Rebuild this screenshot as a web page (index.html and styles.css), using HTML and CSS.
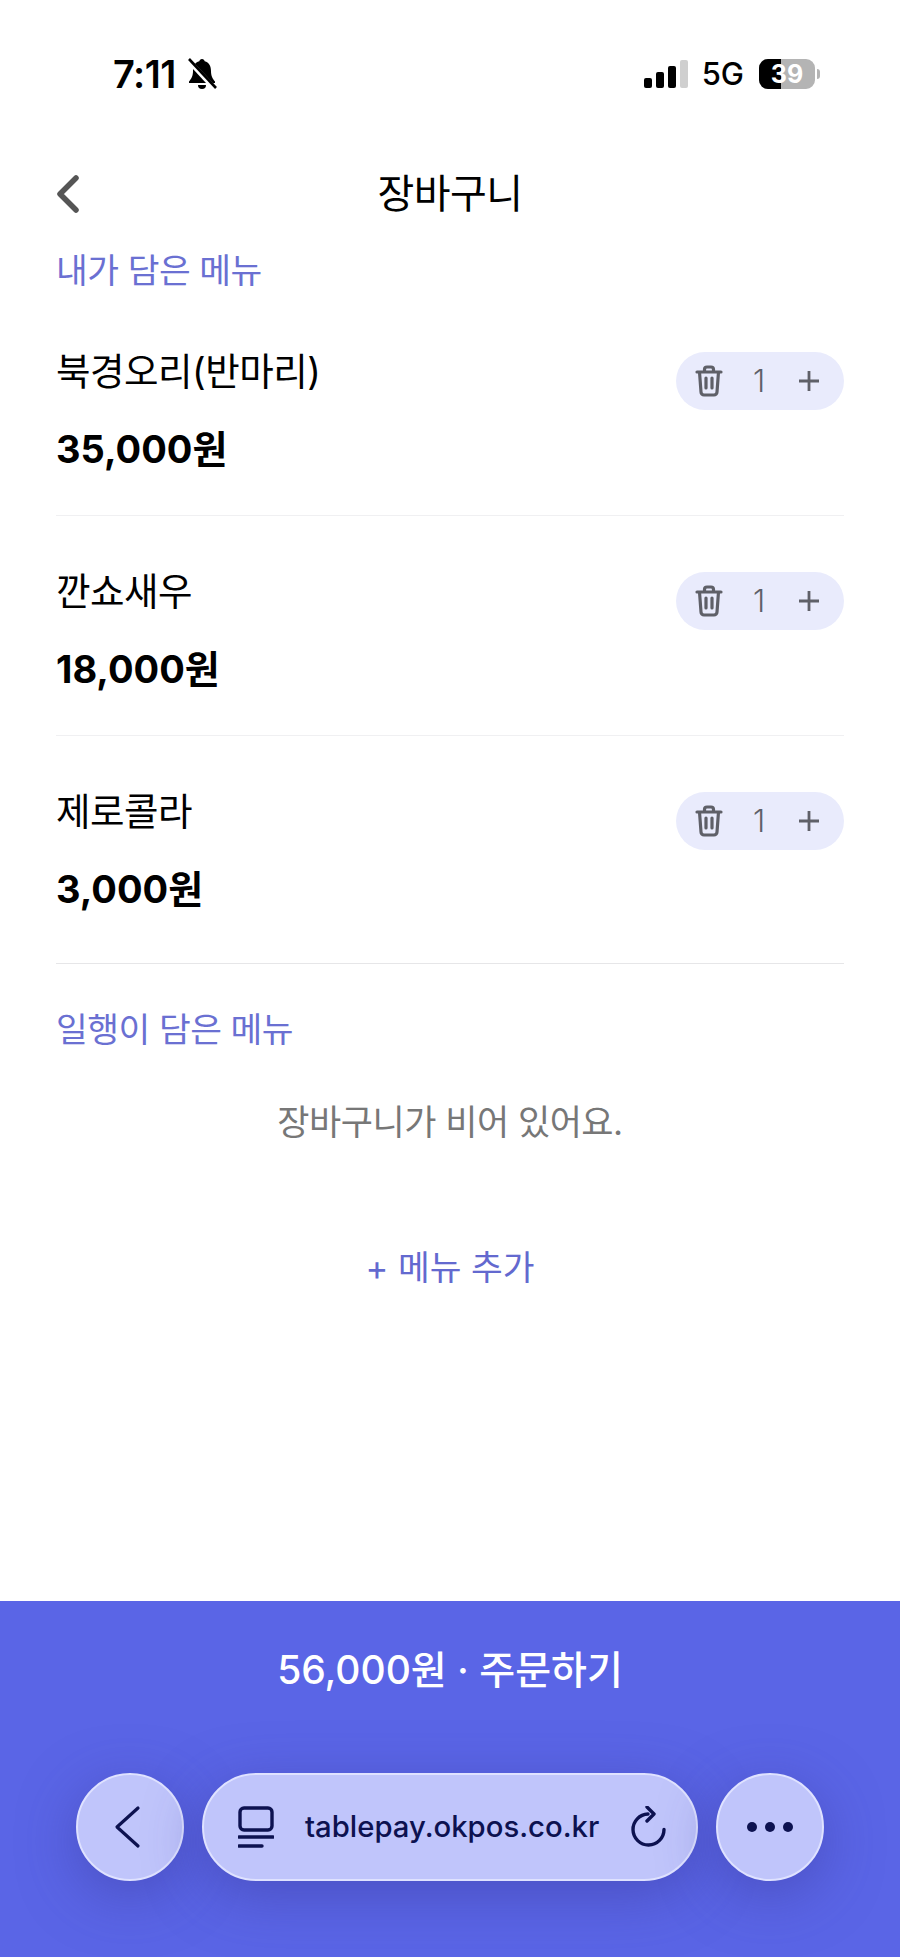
FILE: index.html
```html
<!DOCTYPE html>
<html lang="ko">
<head>
    <meta charset="UTF-8">
    <meta name="viewport" content="width=device-width, initial-scale=1.0">
    <title>장바구니</title>
    <link rel="stylesheet" href="styles.css">
</head>
<body>
    <div class="page">
        <div class="status-bar">
            <div class="status-left">
                <span class="time">7:11</span>
                <svg class="bell" width="30" height="34" viewBox="0 0 30 34">
                    <path d="M15 2c1.500 0 2.500 1 2.700 2.300C22 5.500 24 9 24 14c0 5 1.500 7.500 4 10.500V26H2v-1.500C4.500 21.500 6 19 6 14c0-5 2-8.500 6.300-9.700C12.500 3 13.500 2 15 2z" fill="#000"/>
                    <path d="M11 28h8a4 4 0 0 1-8 0z" fill="#000"/>
                    <path d="M1 3l27 29" stroke="#fff" stroke-width="5"/>
                    <path d="M2 2l27 29" stroke="#000" stroke-width="2.600"/>
                </svg>
            </div>
            <div class="status-right">
                <div class="signal">
                    <span class="bar bar-1"></span>
                    <span class="bar bar-2"></span>
                    <span class="bar bar-3"></span>
                    <span class="bar bar-4"></span>
                </div>
                <span class="network">5G</span>
                <div class="battery"><span class="battery-fill"></span><span class="battery-text">39</span></div>
                <span class="battery-nub"></span>
            </div>
        </div>

        <div class="header">
            <svg class="header-back" width="26" height="38" viewBox="0 0 26 38">
                <path d="M22 3L6 19l16 16" fill="none" stroke="#555" stroke-width="5.500" stroke-linecap="round" stroke-linejoin="round"/>
            </svg>
            <h1 class="header-title">장바구니</h1>
        </div>

        <h2 class="section-title">내가 담은 메뉴</h2>
        <div class="cart-item cart-item-first">
            <div>
                <div class="item-name">북경오리(반마리)</div>
                <div class="item-price">35,000원</div>
            </div>
            <div class="stepper">
                <svg class="trash" width="28" height="32" viewBox="0 0 28 32">
                    <path d="M2 7h24M9.500 7V4.500A2.500 2.500 0 0 1 12 2h4a2.500 2.500 0 0 1 2.500 2.500V7M4.500 7l1.500 20a3 3 0 0 0 3 3h10a3 3 0 0 0 3-3l1.500-20M11 13v10M17 13v10" fill="none" stroke="#5f6068" stroke-width="3.200" stroke-linecap="round" stroke-linejoin="round"/>
                </svg>
                <span class="qty">1</span>
                <svg class="plus" width="22" height="22" viewBox="0 0 22 22">
                    <path d="M1 11h20M11 1v20" stroke="#5f6068" stroke-width="2.800"/>
                </svg>
            </div>
        </div>
        <div class="cart-item">
            <div>
                <div class="item-name">깐쇼새우</div>
                <div class="item-price">18,000원</div>
            </div>
            <div class="stepper">
                <svg class="trash" width="28" height="32" viewBox="0 0 28 32">
                    <path d="M2 7h24M9.500 7V4.500A2.500 2.500 0 0 1 12 2h4a2.500 2.500 0 0 1 2.500 2.500V7M4.500 7l1.500 20a3 3 0 0 0 3 3h10a3 3 0 0 0 3-3l1.500-20M11 13v10M17 13v10" fill="none" stroke="#5f6068" stroke-width="3.200" stroke-linecap="round" stroke-linejoin="round"/>
                </svg>
                <span class="qty">1</span>
                <svg class="plus" width="22" height="22" viewBox="0 0 22 22">
                    <path d="M1 11h20M11 1v20" stroke="#5f6068" stroke-width="2.800"/>
                </svg>
            </div>
        </div>
        <div class="cart-item cart-item-last">
            <div>
                <div class="item-name">제로콜라</div>
                <div class="item-price">3,000원</div>
            </div>
            <div class="stepper">
                <svg class="trash" width="28" height="32" viewBox="0 0 28 32">
                    <path d="M2 7h24M9.500 7V4.500A2.500 2.500 0 0 1 12 2h4a2.500 2.500 0 0 1 2.500 2.500V7M4.500 7l1.500 20a3 3 0 0 0 3 3h10a3 3 0 0 0 3-3l1.500-20M11 13v10M17 13v10" fill="none" stroke="#5f6068" stroke-width="3.200" stroke-linecap="round" stroke-linejoin="round"/>
                </svg>
                <span class="qty">1</span>
                <svg class="plus" width="22" height="22" viewBox="0 0 22 22">
                    <path d="M1 11h20M11 1v20" stroke="#5f6068" stroke-width="2.800"/>
                </svg>
            </div>
        </div>

        <h2 class="section-title section-title-group">일행이 담은 메뉴</h2>
        <p class="empty">장바구니가 비어 있어요.</p>
        <div class="add-menu">+ 메뉴 추가</div>

        <div class="footer">
            <div class="order">56,000원 · 주문하기</div>
            <div class="browser-bar">
                <div class="round-btn">
                    <svg class="bar-back" width="30" height="44" viewBox="0 0 30 44">
                        <path d="M26 3L5 22l21 19" fill="none" stroke="#0d1250" stroke-width="3.200" stroke-linecap="round" stroke-linejoin="round"/>
                    </svg>
                </div>
                <div class="url-pill">
                    <svg class="tabs-icon" width="36" height="42" viewBox="0 0 36 42">
                        <rect x="2" y="2" width="32" height="22" rx="4" fill="none" stroke="#0d1250" stroke-width="3.400"/>
                        <path d="M1 31h34M1 40h23" stroke="#0d1250" stroke-width="3.400" stroke-linecap="round"/>
                    </svg>
                    <span class="url">tablepay.okpos.co.kr</span>
                    <svg class="reload" width="36" height="42" viewBox="0 0 36 42">
                        <path d="M17 8A15.500 15.500 0 1 0 33 23.500" fill="none" stroke="#0d1250" stroke-width="3.400" stroke-linecap="round"/>
                        <path d="M16 1l7 7-7 7" fill="none" stroke="#0d1250" stroke-width="3.400" stroke-linecap="round" stroke-linejoin="round"/>
                    </svg>
                </div>
                <div class="round-btn">
                    <span class="dot"></span><span class="dot"></span><span class="dot"></span>
                </div>
            </div>
        </div>
    </div>
</body>
</html>
```
FILE: styles.css
```css
* {
    box-sizing: border-box;
}

body {
    margin: 0;
    background-color: #ffffff;
    font-family: "Inter", "Noto Sans CJK KR", sans-serif;
    color: #000000;
}

.page {
    display: flex;
    flex-direction: column;
    width: 900px;
    height: 1957px;
    overflow: hidden;
}

/* status bar */
.status-bar {
    display: flex;
    justify-content: space-between;
    align-items: center;
    height: 58px;
    margin-top: 45px;
    padding: 0 80px 0 113px;
}

.status-left {
    display: flex;
    align-items: center;
    gap: 11px;
}

.time {
    font-size: 38px;
    font-weight: 600;
    line-height: 40px;
    letter-spacing: -0.5px;
}

.status-right {
    display: flex;
    align-items: center;
}

.signal {
    display: flex;
    align-items: flex-end;
    gap: 4px;
    height: 28px;
    margin-right: 14px;
}

.bar {
    width: 8px;
    border-radius: 2px;
    background-color: #000000;
}

.bar-1 { height: 10px; }
.bar-2 { height: 16px; }
.bar-3 { height: 22px; }
.bar-4 { height: 28px; background-color: #cfcfcf; }

.network {
    font-size: 31px;
    font-weight: 500;
    line-height: 36px;
    margin-right: 15px;
}

.battery {
    position: relative;
    width: 56px;
    height: 30px;
    border-radius: 9px;
    background-color: #b4b4b4;
    overflow: hidden;
}

.battery-fill {
    display: block;
    width: 22px;
    height: 100%;
    background-color: #000000;
}

.battery-text {
    position: absolute;
    top: 0;
    left: 0;
    width: 100%;
    font-size: 25px;
    font-weight: 700;
    line-height: 30px;
    text-align: center;
    color: #ffffff;
}

.battery-nub {
    width: 3px;
    height: 10px;
    margin-left: 2px;
    border-radius: 0 3px 3px 0;
    background-color: #b4b4b4;
}

/* header */
.header {
    position: relative;
    display: flex;
    align-items: center;
    justify-content: center;
    height: 60px;
    margin-top: 61px;
}

.header-back {
    position: absolute;
    left: 54px;
    top: 11px;
}

.header-title {
    margin: 0;
    font-size: 40px;
    font-weight: 400;
    line-height: 60px;
    letter-spacing: -0.5px;
}

/* cart */
.section-title {
    margin: 25px 56px 0;
    font-size: 34.500px;
    font-weight: 400;
    line-height: 44px;
    letter-spacing: -0.5px;
    color: #6a70d2;
}

.section-title-group {
    margin-top: 44px;
}

.cart-item {
    display: flex;
    justify-content: space-between;
    align-items: flex-start;
    height: 220px;
    margin: 0 56px;
    padding-top: 53px;
    border-bottom: 1px solid #f0f0f2;
}

.cart-item-first {
    height: 223px;
    padding-top: 56px;
}

.cart-item-last {
    height: 228px;
    border-bottom-color: #e6e6e8;
}

.item-name {
    font-size: 37.500px;
    line-height: 46px;
    letter-spacing: -0.5px;
}

.item-price {
    margin-top: 31px;
    font-size: 38px;
    font-weight: 700;
    line-height: 46px;
}

.stepper {
    display: flex;
    align-items: center;
    width: 168px;
    height: 58px;
    margin-top: 3px;
    padding: 0 24px 0 19px;
    border-radius: 29px;
    background-color: #e9ebfc;
}

.trash {
    flex-shrink: 0;
}

.qty {
    flex: 1;
    padding-right: 3px;
    font-size: 31px;
    font-weight: 300;
    line-height: 58px;
    text-align: center;
    color: #5f6068;
}

.empty {
    margin: 47px 0 0;
    font-size: 35px;
    line-height: 46px;
    letter-spacing: -0.5px;
    text-align: center;
    color: #777777;
}

.add-menu {
    margin-top: 100px;
    font-size: 34.500px;
    line-height: 46px;
    text-align: center;
    color: #6369cf;
}

/* footer */
.footer {
    display: flex;
    flex-direction: column;
    margin-top: auto;
    height: 356px;
    background-color: #5a65e6;
}

.order {
    margin-top: 44px;
    font-size: 39px;
    font-weight: 500;
    line-height: 50px;
    text-align: center;
    color: #ffffff;
}

.browser-bar {
    display: flex;
    gap: 18px;
    margin-top: 78px;
    padding: 0 76px;
}

.round-btn,
.url-pill {
    display: flex;
    align-items: center;
    height: 108px;
    border: 2px solid #dfe2ff;
    background-color: #c0c5fb;
    box-shadow: 0 14px 55px rgba(60, 60, 160, 0.5);
}

.round-btn {
    justify-content: center;
    gap: 8px;
    width: 108px;
    border-radius: 50%;
}

.bar-back {
    margin-right: 7px;
}

.url-pill {
    flex: 1;
    padding: 0 29px 0 34px;
    border-radius: 54px;
}

.url {
    flex: 1;
    margin-left: 31px;
    font-size: 29.300px;
    font-weight: 500;
    line-height: 40px;
    white-space: nowrap;
    color: #0d1250;
}

.dot {
    width: 10px;
    height: 10px;
    border-radius: 50%;
    background-color: #0d1250;
}
```
